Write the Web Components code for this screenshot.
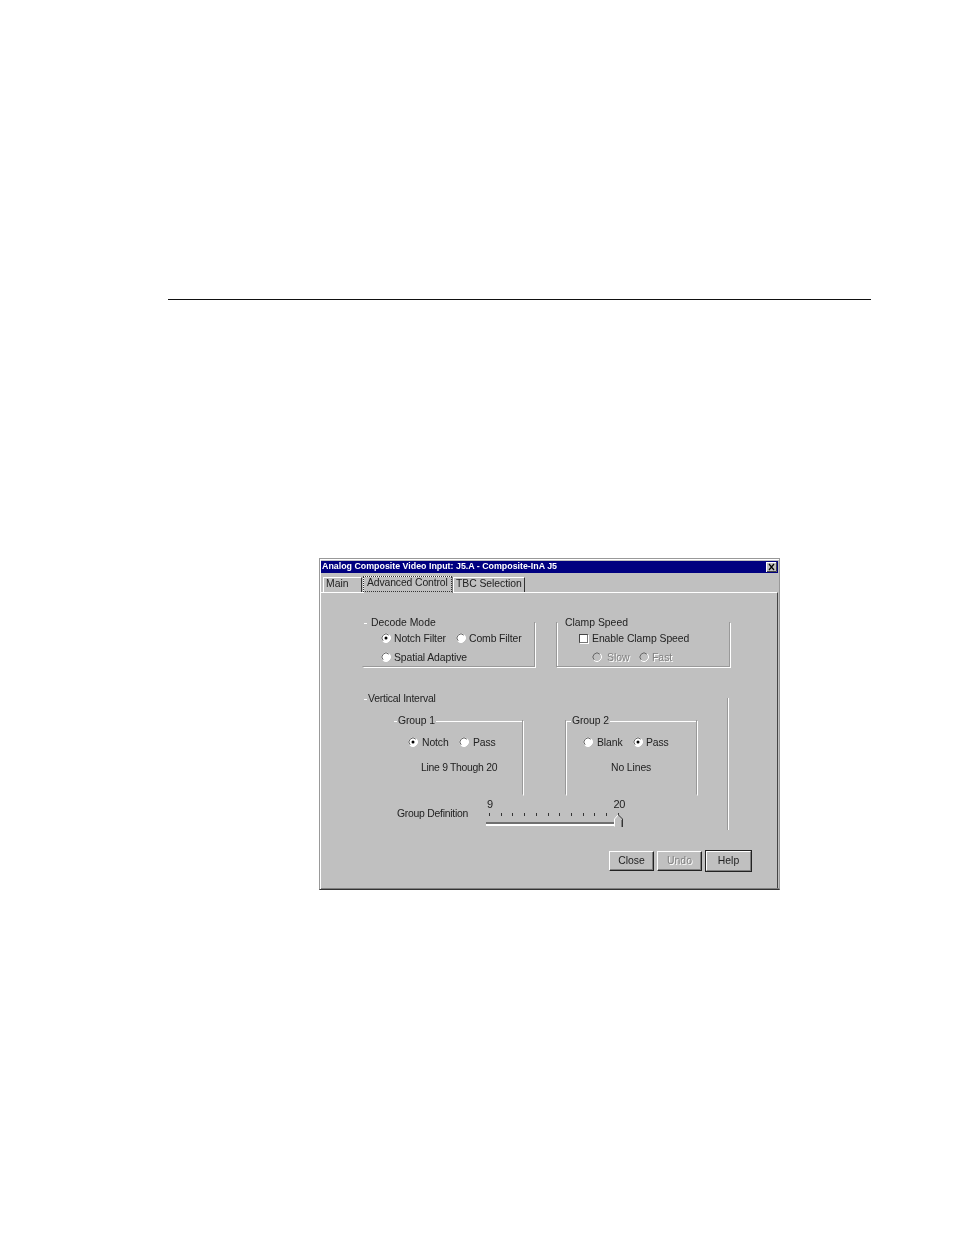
<!DOCTYPE html>
<html>
<head>
<meta charset="utf-8">
<title>Analog Composite Video Input</title>
<style>
html,body{margin:0;background:#fff}
body{font:10.4px "Liberation Sans",Arial,sans-serif;color:#222}
</style>
</head>
<body>
<doc-page>
  <win-dialog heading="Analog Composite Video Input: J5.A - Composite-InA J5">
    <tab-strip slot="tabs">
      <win-tab style="width:39px">Main</win-tab>
      <win-tab active style="width:90px;margin-left:1px;letter-spacing:-.12px">Advanced Control</win-tab>
      <win-tab style="width:72px;letter-spacing:-.05px">TBC Selection</win-tab>
    </tab-strip>

    <panel-row style="margin:24px 0 0 42px">
      <group-box label="Decode Mode" tick="3" label-x="7" noleft style="width:173px;height:51px">
        <opt-row style="margin:3px 0 0 18px;letter-spacing:-.1px">
          <radio-opt checked style="width:75px">Notch Filter</radio-opt>
          <radio-opt>Comb Filter</radio-opt>
        </opt-row>
        <opt-row style="margin:7px 0 0 18px;letter-spacing:-.1px"><radio-opt>Spatial Adaptive</radio-opt></opt-row>
      </group-box>
      <group-box label="Clamp Speed" tick="0" label-x="7" style="width:174px;height:51px;margin-left:21px">
        <opt-row style="margin:3px 0 0 22px;letter-spacing:-.05px"><check-opt>Enable Clamp Speed</check-opt></opt-row>
        <opt-row style="margin:7px 0 0 35px">
          <radio-opt disabled style="width:47px;--gap:5px">Slow</radio-opt>
          <radio-opt disabled>Fast</radio-opt>
        </opt-row>
      </group-box>
    </panel-row>

    <panel-row style="margin:25px 0 0 42px">
      <group-box label="Vertical Interval" tick="3" label-x="4" noleft nobottom noright style="width:365px;height:138px;letter-spacing:-.2px">
        <panel-row style="margin:10px 0 0 30px">
          <group-box label="Group 1" tick="130" label-x="4" noleft nobottom style="width:131px;height:81px;letter-spacing:-.1px">
            <opt-row style="margin:9px 0 0 15px">
              <radio-opt checked style="width:51px;--gap:4px">Notch</radio-opt>
              <radio-opt style="--gap:4px">Pass</radio-opt>
            </opt-row>
            <div style="margin:14px 0 0 28px;white-space:nowrap;letter-spacing:-.28px">Line 9 Though 20</div>
          </group-box>
          <group-box label="Group 2" tick="132" label-x="5" nobottom style="width:132px;height:81px;margin-left:42px;letter-spacing:-.1px">
            <opt-row style="margin:9px 0 0 17px">
              <radio-opt style="width:50px;--gap:4px">Blank</radio-opt>
              <radio-opt checked>Pass</radio-opt>
            </opt-row>
            <div style="margin:14px 0 0 45px;white-space:nowrap">No Lines</div>
          </group-box>
        </panel-row>
        <panel-row style="margin:3px 0 0 34px">
          <span style="margin-top:9px;width:89px;white-space:nowrap;letter-spacing:-.25px">Group Definition</span>
          <track-slider from="9" to="20"></track-slider>
        </panel-row>
      </group-box>
      <i style="width:1px;height:132px;margin:5px 0 0 0;background:#fff;box-shadow:-1px 0 #999"></i>
    </panel-row>

    <panel-row style="margin:20px 0 0 288px">
      <push-button>Close</push-button>
      <push-button disabled style="margin-left:3px">Undo</push-button>
      <push-button primary style="margin-left:4px">Help</push-button>
    </panel-row>
  </win-dialog>
</doc-page>

<script>
const make = (name, css, html) =>
  customElements.define(name, class extends HTMLElement {
    constructor() {
      super().attachShadow({ mode: "open" }).innerHTML = `<style>${css}</style>` + (typeof html == "function" ? "" : html)
    }
    connectedCallback() {
      if (typeof html == "function") this.shadowRoot.innerHTML += html(this)
    }
  })

make("doc-page", `
  :host{display:block;height:1235px;padding:299px 0 0 0;box-sizing:border-box}
  hr{margin:0 0 0 168px;width:703px;height:1px;border:0;background:#111}
  .holder{margin:258px 0 0 319px}
`, `<hr><div class="holder"><slot></slot></div>`)

make("win-dialog", `
  :host{display:block;width:461px;height:332px;box-sizing:border-box;background:#c0c0c0;filter:blur(.3px);
    border:1px solid #999;border-bottom-color:#333;padding:2px 1px 1px 1px;
    box-shadow:inset 1px 1px #fff,inset 0 -1px #808080}
  .bar{display:flex;align-items:center;height:12px;background:#000080;color:#fff;font-weight:bold;font-size:8.85px;line-height:10px;padding:0 1px;white-space:nowrap}
  .bar span{flex:1;margin-top:-2px}
  .bar svg{display:block}
  .tabs{height:17px;margin-top:2px}
  .body{border-top:1px solid #fff;border-right:1px solid #444;height:296px;box-sizing:border-box}
`, el => `
  <div class="bar"><span>${el.getAttribute("heading")}</span>
    <svg width="11" height="10" viewBox="0 0 11 10"><rect width="11" height="10" fill="#c0c0c0"/><path d="M0 9.5H10.5V0" fill="none" stroke="#444"/><path d="M0 .5H10M.5 0V10" stroke="#fff"/><path d="M3 2l5 6M8 2l-5 6" stroke="#000" stroke-width="1.2"/></svg>
  </div>
  <div class="tabs"><slot name="tabs"></slot></div>
  <div class="body"><slot></slot></div>`)

make("tab-strip", `:host{display:flex;align-items:flex-end;height:17px;padding-left:2px}`, `<slot></slot>`)

make("win-tab", `
  :host{display:block;box-sizing:border-box;height:15px;line-height:12px;padding-left:2px;white-space:nowrap;
    border-left:1px solid #fff;border-top:1px solid #fff;border-right:1px solid #333}
  :host([active]){height:17px;position:relative;top:1px;background:#c0c0c0;padding-left:0;margin-top:-2px;border-right-color:#777}
  :host([active]) span{outline:1px dotted #333;display:block;margin:0 1px 0 0;height:14px;line-height:11px;padding:0 0 0 3px}
`, `<span><slot></slot></span>`)

make("panel-row", `:host{display:flex;align-items:flex-start}`, `<slot></slot>`)
make("opt-row", `:host{display:flex;align-items:center;height:12px}`, `<slot></slot>`)

make("group-box", `
  :host{display:block;position:relative}
  .label{position:relative;z-index:1;display:inline-block;background:#c0c0c0;height:12px;line-height:12px;padding:0 1px;white-space:nowrap}
  .frame{position:absolute;inset:6px 0 0 0;box-sizing:border-box;border:solid #fff;border-width:0 1px 1px 1px;
    background:linear-gradient(#fff,#fff) 0 0/var(--tick) 1px no-repeat}
  .frame::before{content:"";position:absolute;top:-1px;right:0;bottom:0;left:-2px;border:solid #999;border-width:0 1px 1px 1px}
  :host([noleft]) .frame,:host([noleft]) .frame::before{border-left-color:transparent}
  :host([noright]) .frame,:host([noright]) .frame::before{border-right-color:transparent}
  :host([nobottom]) .frame,:host([nobottom]) .frame::before{border-bottom-color:transparent}
  .inner{position:relative}
`, el => `
  <div class="frame" style="--tick:${el.getAttribute("tick")}px"></div>
  <div class="label" style="margin-left:${el.getAttribute("label-x")}px">${el.getAttribute("label")}</div>
  <div class="inner"><slot></slot></div>`)

make("radio-opt", `
  :host{display:flex;align-items:center;white-space:nowrap;box-sizing:border-box}
  svg{display:block;margin-right:var(--gap,3px);flex:none}
  :host([disabled]) span{color:#808080;text-shadow:1px 1px #fff}
`, el => {
  const off = el.hasAttribute("disabled")
  return `<svg width="10" height="10" viewBox="0 0 10 10">
    <circle cx="5" cy="5" r="4.5" fill="${off ? "#c0c0c0" : "#fff"}"/>
    <path d="M2.17 7.83A4 4 0 0 1 7.83 2.17" fill="none" stroke="#666"/>
    <path d="M8.18 1.82A4.5 4.5 0 0 1 1.82 8.18" fill="none" stroke="#fff"/>
    ${el.hasAttribute("checked") ? `<circle cx="5" cy="5" r="1.5" fill="#000"/>` : ""}
  </svg><span><slot></slot></span>`
})

make("check-opt", `
  :host{display:flex;align-items:center;white-space:nowrap}
  i{display:block;box-sizing:border-box;width:9px;height:9px;background:#fff;border:1px solid #777;border-top-color:#444;border-left-color:#444;box-shadow:1px 1px #fff;margin-right:4px}
`, `<i></i><span><slot></slot></span>`)

make("track-slider", `
  :host{display:block;width:140px;height:34px;position:relative}
  .nums{display:flex;justify-content:space-between;font-size:11px;line-height:10px;letter-spacing:-.4px;padding:0 0 0 1px;width:138px}
  .ticks{display:flex;justify-content:space-between;margin:4px 0 0 3px;width:130px;height:3px}
  .ticks i{width:1px;height:3px;background:#333}
  .ticks i:last-child{height:6px}
  .track{margin-top:6px;width:129px;height:4px;box-sizing:border-box;background:#707070;border-bottom:2px solid #fff}
  svg{position:absolute;left:128px;top:15px}
`, el => `
  <div class="nums"><span>${el.getAttribute("from")}</span><span>${el.getAttribute("to")}</span></div>
  <div class="ticks">${"<i></i>".repeat(12)}</div>
  <div class="track"></div>
  <svg width="9" height="13" viewBox="0 0 9 13"><path d="M0 12.5V5L4 .5 8 5V13H0Z" fill="#c0c0c0"/><path d="M.5 12.5V5L4 1" fill="none" stroke="#fff"/><path d="M4.5 1L8.5 5V13" fill="none" stroke="#333"/><path d="M7.5 6V13" stroke="#808080"/></svg>`)

make("push-button", `
  :host{display:block;box-sizing:border-box;width:45px;height:20px;line-height:18px;text-align:center;background:#c0c0c0;
    border:1px solid #fff;border-right-color:#222;border-bottom-color:#222;box-shadow:inset -1px -1px #808080}
  :host([disabled]) span{color:#808080;text-shadow:1px 1px #fff}
  :host([primary]){outline:1px solid #222;border-color:#fff #808080 #808080 #fff;box-shadow:none}
`, `<span><slot></slot></span>`)
</script>
</body>
</html>
